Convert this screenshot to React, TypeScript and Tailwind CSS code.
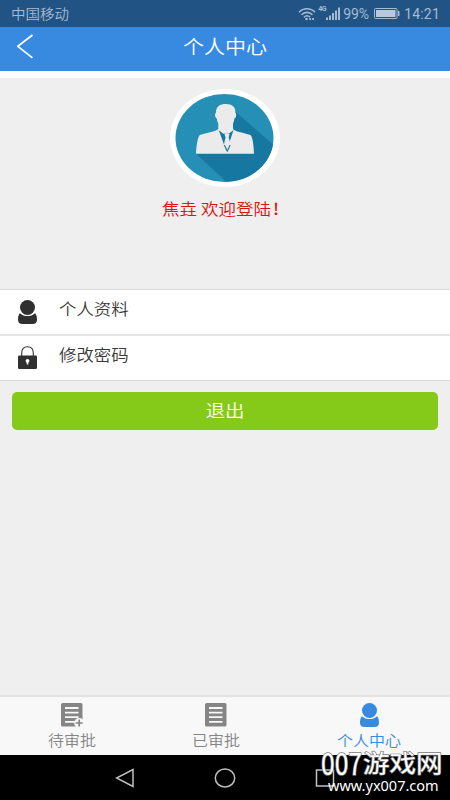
import type { ReactNode } from "react";

function Label({ className, children }: { className: string; children: ReactNode }) {
  return (
    <span className={`inline-block whitespace-nowrap leading-none ${className}`}>
      {children}
    </span>
  );
}

function StatusBar() {
  return (
    <div className="flex h-[27px] items-center justify-between bg-[#215385] pr-[10px] pl-[11px] text-[#a5bbd2]">
      <Label className="text-[14.5px] scale-y-92">中国移动</Label>
      <div className="flex items-center">
        <svg className="h-[14px] w-[18px]" viewBox="0 0 18 14" fill="none" stroke="currentColor" strokeWidth="1.600">
          <path d="M1 5.200C5.500.6 12.500.6 17 5.200M3.500 7.800c3.200-3.200 7.800-3.200 11 0M6 10.200c1.700-1.700 4.200-1.700 6 0" />
          <circle cx="8.500" cy="12" r="1.300" fill="currentColor" stroke="none" />
          <path d="M11.300 12h1.800M14.200 12H16" strokeWidth="2" />
        </svg>
        <Label className="ml-[2px] w-[8px] -translate-y-[4px] font-[Roboto,sans-serif] text-[7px] font-bold tracking-[-0.5px]">4G</Label>
        <svg className="h-[13px] w-[14px]" viewBox="0 0 14 13" fill="currentColor">
          <path d="M0 10.500h2v2.500H0zM3 8.500h2v4.500H3zM6 6h2v7H6zM9 3.500h2V13H9zM12 .5h2V13h-2z" />
        </svg>
        <Label className="ml-[3px] w-[28px] font-[Roboto,sans-serif] text-[14px] font-normal">99%</Label>
        <svg className="ml-[3px] h-[11px] w-[26px]" viewBox="0 0 26 11">
          <rect x=".5" y=".5" width="22.500" height="10" rx="1" fill="none" stroke="currentColor" />
          <rect x="2" y="2" width="19.500" height="7" fill="#b8c9dc" />
          <path d="M24 3h1.500v5H24z" fill="currentColor" />
        </svg>
        <Label className="ml-[4px] font-[Roboto,sans-serif] text-[14px] font-normal tracking-[0.2px]">14:21</Label>
      </div>
    </div>
  );
}

function Avatar() {
  return (
    <svg className="h-[98px] w-[110px]" viewBox="0 0 110 98">
      <defs>
        <clipPath id="disc">
          <ellipse cx="54.500" cy="49" rx="49" ry="44" />
        </clipPath>
      </defs>
      <ellipse cx="55" cy="49" rx="55" ry="49" fill="#fff" />
      <g clipPath="url(#disc)">
        <path d="M0 0h110v98H0z" fill="#268fb6" />
        <path d="M65 22.500 105 57V98H62L26 64.700z" fill="#1678a1" />
        <path d="M26 64.700c.3-7 1.500-15 3.300-18.200 2-2 15-3 19-6.500v-5.500c-.8-1.500-1.300-3-1.500-5-1.800-.8-2.300-4.500-.8-6C45.800 17.500 50 15 56 15s9.800 3 9.300 8.500c1.500 1.500 1 5.200-.8 6-.3 2-.8 3.500-1.500 5V40c3 3.500 16 4.500 18 6.500 2 3.200 2.700 11.200 3 18.200z" fill="#ebebeb" />
        <path d="M48.700 41 56.500 62.500 63.500 41c-1.500 1-3.500 3-5 3.800h-5c-1.500-.8-3.300-2.800-4.800-3.800z" fill="#1678a1" />
        <path d="M54.500 45h5l-.8 3.500L61 56.500 57.300 63l-3.600-6.500 1.800-8z" fill="#ebebeb" />
        <path d="m54.300 56 3 6 2.900-6" fill="none" stroke="#1678a1" strokeWidth="1.100" />
      </g>
    </svg>
  );
}

function PersonIcon({ className }: { className: string }) {
  return (
    <svg className={className} viewBox="0 0 19 24" fill="currentColor">
      <circle cx="9.500" cy="7.500" r="7.500" />
      <path d="M2 13.200c4 3.800 11 3.800 15 0 1.300 1.200 2 3.500 2 6.300 0 3-1.500 4.500-4.500 4.500h-10C1.500 24 0 22.500 0 19.500c0-2.800.7-5.100 2-6.300z" />
    </svg>
  );
}

function LockIcon() {
  return (
    <svg className="h-[23px] w-[19px]" viewBox="0 0 19 23">
      <path d="M3.700 10V7C3.700 3 6 .7 9.500.7S15.300 3 15.300 7v3" fill="none" stroke="#303030" strokeWidth="1.100" />
      <rect y="9.500" width="19" height="13.500" rx="1.200" fill="#303030" />
      <circle cx="9.500" cy="14.800" r="1.900" fill="#fff" />
      <path d="M8.700 15h1.600v3.500H8.700z" fill="#fff" />
    </svg>
  );
}

function ListIcon({ plus = false }: { plus?: boolean }) {
  return (
    <svg className="h-[24px] w-[22px] overflow-visible" viewBox="0 0 22 24">
      <rect width="21.500" height="23.500" rx="1.500" fill="#858585" />
      <path d="M4 5h13.500M4 9.600h13.500M4 14.200h13.500M4 18.800h13.500" stroke="#f8f8f8" strokeWidth="1.800" />
      {plus && (
        <>
          <circle cx="18.200" cy="20" r="5" fill="#f8f8f8" />
          <path d="M18.200 16.500v7M14.700 20h7" stroke="#858585" strokeWidth="1.700" />
        </>
      )}
    </svg>
  );
}

function MenuRow({ icon, text }: { icon: ReactNode; text: string }) {
  return (
    <div className="flex h-[44px] pl-[18px]">
      <div className="w-[41px] pt-[10px]">{icon}</div>
      <Label className="mt-[9px] text-[17.4px] text-[#3a3a3a] scale-y-92">{text}</Label>
    </div>
  );
}

export default function App() {
  return (
    <div className="relative flex h-[800px] w-[450px] flex-col overflow-hidden bg-[#efefef] font-['Noto_Sans_CJK_SC',sans-serif] font-[350]">
      <StatusBar />
      <header className="flex h-[44px] justify-center bg-[#388ae0] text-white">
        <svg className="mt-[7px] ml-[17px] h-[25px] w-[17px]" viewBox="0 0 17 25" fill="none" stroke="currentColor" strokeWidth="1.700">
          <path d="M15.500 1 .8 12.300l14.700 11.500" />
        </svg>
        <h1 className="flex flex-1 justify-center pr-[34px]">
          <Label className="mt-[8px] text-[21px] scale-y-90">个人中心</Label>
        </h1>
      </header>
      <div className="h-[7px] bg-white" />

      <section className="flex h-[211px] flex-col items-center pt-[11px]">
        <Avatar />
        <Label className="mt-[13px] -ml-[9px] text-[17.5px] text-[#df1111] scale-y-92">
          焦垚 欢迎登陆<span className="ml-[2px] font-medium">!</span>
        </Label>
      </section>

      <div className="border-y border-[#d9d9d9] bg-white">
        <MenuRow icon={<PersonIcon className="h-[24px] w-[19px] text-[#303030]" />} text="个人资料" />
        <div className="h-[2px] bg-[#e5e5e5]" />
        <MenuRow icon={<LockIcon />} text="修改密码" />
      </div>

      <button className="mx-[12px] mt-[11px] h-[38px] rounded-[5px] bg-[#86ca19] text-white">
        <Label className="text-[19.5px] scale-y-90">退出</Label>
      </button>

      <nav className="mt-auto flex h-[60px] border-t-2 border-[#e3e3e3] bg-[#f8f8f8] text-[#858585]">
        <div className="flex w-[144px] flex-col items-center pt-[6px]">
          <ListIcon plus />
          <Label className="mt-[5px] text-[16px] scale-y-90">待审批</Label>
        </div>
        <div className="flex w-[144px] flex-col items-center pt-[6px]">
          <ListIcon />
          <Label className="mt-[5px] text-[16px] scale-y-90">已审批</Label>
        </div>
        <div className="flex flex-1 flex-col items-center pt-[6px] text-[#388ae0]">
          <PersonIcon className="h-[24px] w-[19px]" />
          <Label className="mt-[5px] text-[16px] scale-y-90">个人中心</Label>
        </div>
      </nav>

      <div className="flex h-[45px] items-center bg-black pl-[115px] text-[#c0c0c0]">
        <svg className="h-[20px] w-[220px]" viewBox="0 0 220 20" fill="none" stroke="currentColor" strokeWidth="1.500">
          <path d="M18 1.500v17L1.500 10z" />
          <ellipse cx="110" cy="10" rx="9.700" ry="9" />
          <rect x="201.500" y="2" width="17" height="16" />
        </svg>
      </div>

      {/* site mark over the bottom right corner */}
      <div className="absolute top-[748px] left-[321px] flex flex-col text-white">
        <div className="flex h-[28px] items-center font-normal [paint-order:stroke] [-webkit-text-stroke:1.5px_#777]">
          <Label className="w-[42px] origin-left scale-x-82 text-[30px]">007</Label>
          <Label className="text-[26.5px] scale-y-92">游戏网</Label>
        </div>
        <Label className="mt-[2px] ml-[7px] font-['Noto_Sans',sans-serif] text-[14.5px] font-normal">www.yx007.com</Label>
      </div>
    </div>
  );
}
